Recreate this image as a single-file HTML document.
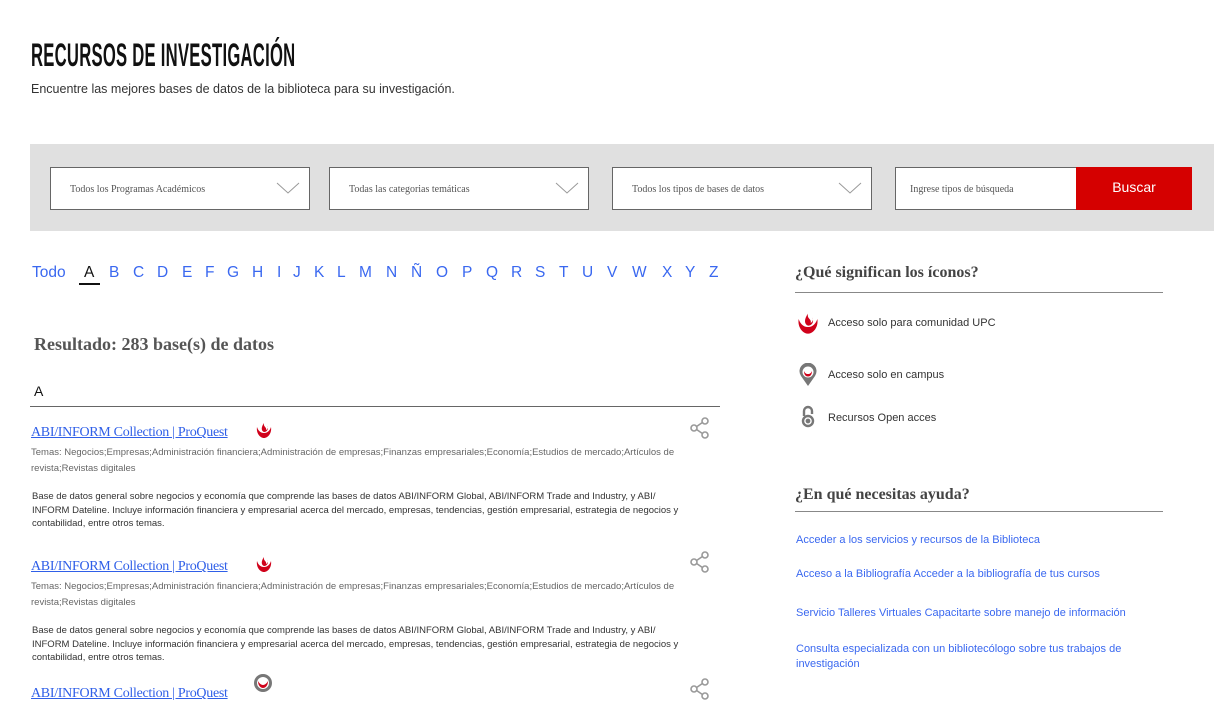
<!DOCTYPE html>
<html><head><meta charset="utf-8"><style>
*{margin:0;padding:0;box-sizing:border-box}
body{width:1222px;height:691px;overflow:hidden;background:#fff;font-family:"Liberation Sans",sans-serif;color:#333;position:relative}
.a{position:absolute;white-space:nowrap}
.title{left:31px;top:37px;font-size:32px;font-weight:bold;font-family:"Liberation Sans Narrow","Liberation Sans",sans-serif;color:#111;transform:scaleX(.52);transform-origin:left top;letter-spacing:0.5px}
.sub{left:31px;top:82px;font-size:12.5px;color:#333}
.band{left:30px;top:144px;width:1184px;height:87px;background:#e0e0e0}
.sel{position:absolute;top:167px;height:43px;background:#fff;border:1px solid #666;font-family:"Liberation Serif",serif;font-size:10px;color:#555;padding:16px 0 0 19px}
.sel svg{position:absolute;right:9px;top:14px}
.btn{left:1076px;top:167px;width:116px;height:43px;background:#d50000;color:#fff;font-size:14px;text-align:center;line-height:40px}
.L{position:absolute;top:264px;font-size:15.5px;color:#3a68f0}
.res{left:34px;top:334px;font-size:18px;font-family:"Liberation Serif",serif;font-weight:bold;color:#555}
.hr{position:absolute;height:1px;background:#666}
.lnk{font-family:"Liberation Serif",serif;font-size:14px;color:#2f5fe8;text-decoration:underline;letter-spacing:-0.3px}
.tm{font-size:9.5px;color:#666;line-height:16px;white-space:normal;width:680px}
.ds{font-size:9.5px;color:#333;line-height:13.5px;white-space:normal;width:660px}
.h3{font-family:"Liberation Serif",serif;font-weight:bold;font-size:16px;color:#444}
.ic{font-size:11px;color:#333}
.hl{font-size:11px;color:#3a68f0;line-height:15px}
</style></head><body>
<div class="a title">RECURSOS DE INVESTIGACIÓN</div>
<div class="a sub">Encuentre las mejores bases de datos de la biblioteca para su investigación.</div>
<div class="a band"></div>
<div class="sel" style="left:50px;width:260px">Todos los Programas Académicos<svg width="24" height="12"><path d="M1 1 L12 11 L23 1" fill="none" stroke="#999"/></svg></div>
<div class="sel" style="left:329px;width:260px">Todas las categorias temáticas<svg width="24" height="12"><path d="M1 1 L12 11 L23 1" fill="none" stroke="#999"/></svg></div>
<div class="sel" style="left:612px;width:260px">Todos los tipos de bases de datos<svg width="24" height="12"><path d="M1 1 L12 11 L23 1" fill="none" stroke="#999"/></svg></div>
<div class="sel" style="left:895px;width:182px;padding-left:14px">Ingrese tipos de búsqueda</div>
<div class="a btn">Buscar</div>

<div class="L" style="left:32px">Todo</div>
<div class="L" style="left:84px;color:#111">A</div><div class="hr" style="left:79px;top:283px;width:21px;background:#111;height:1.5px"></div>
<div class="L" style="left:109px">B</div><div class="L" style="left:133px">C</div><div class="L" style="left:157px">D</div><div class="L" style="left:182px">E</div><div class="L" style="left:205px">F</div><div class="L" style="left:227px">G</div><div class="L" style="left:252px">H</div><div class="L" style="left:277px">I</div><div class="L" style="left:293px">J</div><div class="L" style="left:314px">K</div><div class="L" style="left:337px">L</div><div class="L" style="left:359px">M</div><div class="L" style="left:386px">N</div><div class="L" style="left:411px">Ñ</div><div class="L" style="left:436px">O</div><div class="L" style="left:462px">P</div><div class="L" style="left:486px">Q</div><div class="L" style="left:511px">R</div><div class="L" style="left:535px">S</div><div class="L" style="left:559px">T</div><div class="L" style="left:582px">U</div><div class="L" style="left:607px">V</div><div class="L" style="left:632px">W</div><div class="L" style="left:662px">X</div><div class="L" style="left:685px">Y</div><div class="L" style="left:709px">Z</div>

<div class="a res">Resultado: 283 base(s) de datos</div>
<div class="a" style="left:34px;top:383px;font-size:14px;color:#111">A</div>
<div class="hr" style="left:30px;top:406px;width:690px"></div>

<div class="a" style="left:31px;top:423px"><span class="lnk">ABI/INFORM Collection | ProQuest</span></div>
<svg class="a" style="left:255px;top:421px" width="18" height="18" viewBox="0 0 18 18"><path d="M2 6 C1 12 5 17 9 17 C13 17 17 12 16 6 C15 9 13 12 9 12 C5 12 3 9 2 6Z M9 11 C6 10 6 6 9 2 C8 6 12 6 11 9 C13 8 13 6 12 5 C14 8 12 11 9 11Z" fill="#d0021b"/></svg>
<svg class="a" style="left:689px;top:417px" width="22" height="22" viewBox="0 0 22 22" fill="none" stroke="#999" stroke-width="1.6"><circle cx="16" cy="4" r="3"/><circle cx="5" cy="11" r="3"/><circle cx="16" cy="18" r="3"/><path d="M7.6 9.5 L13.4 5.5 M7.6 12.5 L13.4 16.5"/></svg>
<div class="a tm" style="left:31px;top:445px">Temas: Negocios;Empresas;Administración financiera;Administración de empresas;Finanzas empresariales;Economía;Estudios de mercado;Artículos de revista;Revistas digitales</div>
<div class="a ds" style="left:32px;top:490px">Base de datos general sobre negocios y economía que comprende las bases de datos ABI/INFORM Global, ABI/INFORM Trade and Industry, y ABI/ INFORM Dateline. Incluye información financiera y empresarial acerca del mercado, empresas, tendencias, gestión empresarial, estrategia de negocios y contabilidad, entre otros temas.</div>

<div class="a" style="left:31px;top:557px"><span class="lnk">ABI/INFORM Collection | ProQuest</span></div>
<svg class="a" style="left:255px;top:555px" width="18" height="18" viewBox="0 0 18 18"><path d="M2 6 C1 12 5 17 9 17 C13 17 17 12 16 6 C15 9 13 12 9 12 C5 12 3 9 2 6Z M9 11 C6 10 6 6 9 2 C8 6 12 6 11 9 C13 8 13 6 12 5 C14 8 12 11 9 11Z" fill="#d0021b"/></svg>
<svg class="a" style="left:689px;top:551px" width="22" height="22" viewBox="0 0 22 22" fill="none" stroke="#999" stroke-width="1.6"><circle cx="16" cy="4" r="3"/><circle cx="5" cy="11" r="3"/><circle cx="16" cy="18" r="3"/><path d="M7.6 9.5 L13.4 5.5 M7.6 12.5 L13.4 16.5"/></svg>
<div class="a tm" style="left:31px;top:579px">Temas: Negocios;Empresas;Administración financiera;Administración de empresas;Finanzas empresariales;Economía;Estudios de mercado;Artículos de revista;Revistas digitales</div>
<div class="a ds" style="left:32px;top:624px">Base de datos general sobre negocios y economía que comprende las bases de datos ABI/INFORM Global, ABI/INFORM Trade and Industry, y ABI/ INFORM Dateline. Incluye información financiera y empresarial acerca del mercado, empresas, tendencias, gestión empresarial, estrategia de negocios y contabilidad, entre otros temas.</div>
<div class="a" style="left:31px;top:684px"><span class="lnk">ABI/INFORM Collection | ProQuest</span></div>
<svg class="a" style="left:253px;top:673px" width="20" height="20" viewBox="0 0 20 20"><circle cx="10" cy="10" r="9" fill="#777"/><circle cx="10" cy="10" r="6" fill="#fff"/><path d="M5 8 C5 13 8 15 10 15 C12 15 15 13 15 8 C14 10 12 12 10 12 C8 12 6 10 5 8Z" fill="#d0021b"/></svg>
<svg class="a" style="left:689px;top:678px" width="22" height="22" viewBox="0 0 22 22" fill="none" stroke="#999" stroke-width="1.6"><circle cx="16" cy="4" r="3"/><circle cx="5" cy="11" r="3"/><circle cx="16" cy="18" r="3"/><path d="M7.6 9.5 L13.4 5.5 M7.6 12.5 L13.4 16.5"/></svg>

<div class="a h3" style="left:795px;top:264px">¿Qué significan los íconos?</div>
<div class="hr" style="left:795px;top:292px;width:368px;background:#888"></div>
<svg class="a" style="left:796px;top:311px" width="24" height="24" viewBox="0 0 18 18"><path d="M2 6 C1 12 5 17 9 17 C13 17 17 12 16 6 C15 9 13 12 9 12 C5 12 3 9 2 6Z M9 11 C6 10 6 6 9 2 C8 6 12 6 11 9 C13 8 13 6 12 5 C14 8 12 11 9 11Z" fill="#d0021b"/></svg>
<div class="a ic" style="left:828px;top:317px">Acceso solo para comunidad UPC</div>
<svg class="a" style="left:798px;top:363px" width="20" height="24" viewBox="0 0 20 24"><path d="M10 23 L3 13 A8.5 8.5 0 1 1 17 13 Z" fill="#777"/><circle cx="10" cy="9" r="5.5" fill="#fff"/><path d="M6 8 C6 12 8 13.5 10 13.5 C12 13.5 14 12 14 8 C13 10 12 11 10 11 C8 11 7 10 6 8Z" fill="#d0021b"/></svg>
<div class="a ic" style="left:828px;top:369px">Acceso solo en campus</div>
<svg class="a" style="left:800px;top:405px" width="16" height="24" viewBox="0 0 16 24" fill="none" stroke="#777" stroke-width="2.4"><path d="M4 11 V6 A4 4 0 0 1 12 6 V9"/><circle cx="8" cy="16" r="5"/><circle cx="8" cy="16" r="1.2" fill="#777"/></svg>
<div class="a ic" style="left:828px;top:412px">Recursos Open acces</div>

<div class="a h3" style="left:795px;top:486px">¿En qué necesitas ayuda?</div>
<div class="hr" style="left:795px;top:511px;width:368px;background:#888"></div>
<div class="a hl" style="left:796px;top:533px">Acceder a los servicios y recursos de la Biblioteca</div>
<div class="a hl" style="left:796px;top:567px">Acceso a la Bibliografía Acceder a la bibliografía de tus cursos</div>
<div class="a hl" style="left:796px;top:606px">Servicio Talleres Virtuales Capacitarte sobre manejo de información</div>
<div class="a hl" style="left:796px;top:642px;white-space:normal;width:350px">Consulta especializada con un bibliotecólogo sobre tus trabajos de investigación</div>
</body></html>
